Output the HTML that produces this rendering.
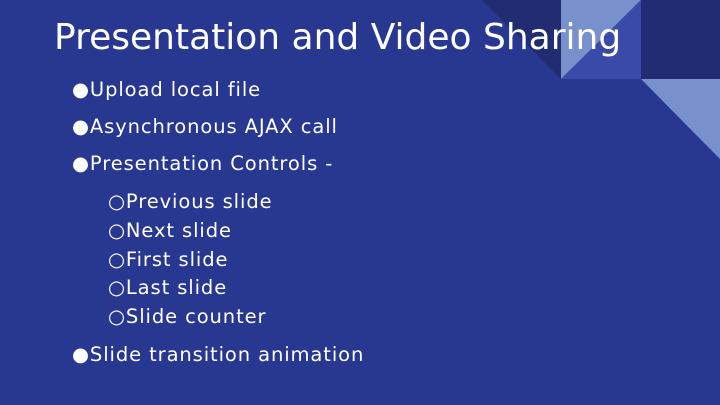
<!DOCTYPE html>
<html><head><style>
body{margin:0;width:720px;height:405px;background:#283891;position:relative;overflow:hidden;font-family:"DejaVu Sans","Liberation Sans",sans-serif;color:#fff}
.t{position:absolute;white-space:nowrap;line-height:1}
.b{font-size:19.5px;letter-spacing:0.9px}
</style></head><body>
<svg width="720" height="405" style="position:absolute;left:0;top:0">
<polygon points="482,0 561,0 561,79" fill="#222c72"/>
<polygon points="561,0 641,0 561,79" fill="#7891cc"/>
<polygon points="641,0 641,79 561,79" fill="#3a4aa8"/>
<rect x="641" y="0" width="79" height="79" fill="#222c72"/>
<polygon points="641,79 720,79 720,159" fill="#7891cc"/>
</svg>
<div class="t" style="left:54px;top:20px;font-size:36px">Presentation and Video Sharing</div>
<div class="t b" style="left:72px;top:80px">●Upload local file</div>
<div class="t b" style="left:72px;top:117px">●Asynchronous AJAX call</div>
<div class="t b" style="left:72px;top:154px">●Presentation Controls -</div>
<div class="t b" style="left:108px;top:192px">○Previous slide</div>
<div class="t b" style="left:108px;top:221px">○Next slide</div>
<div class="t b" style="left:108px;top:250px">○First slide</div>
<div class="t b" style="left:108px;top:278px">○Last slide</div>
<div class="t b" style="left:108px;top:307px">○Slide counter</div>
<div class="t b" style="left:72px;top:345px">●Slide transition animation</div>
</body></html>
